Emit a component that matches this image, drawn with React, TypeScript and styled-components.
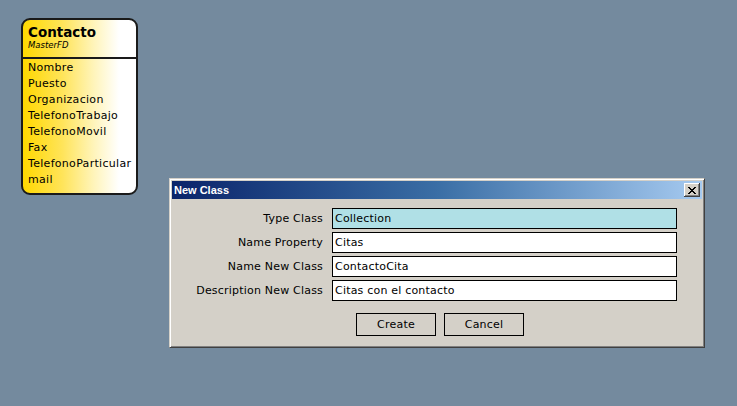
import React from 'react';
import styled, { createGlobalStyle } from 'styled-components';

const GlobalStyle = createGlobalStyle`
  html, body {
    margin: 0;
    padding: 0;
    background: #748a9e;
  }
  body {
    font-family: "DejaVu Sans", Verdana, sans-serif;
    font-size: 11px;
  }
`;

const Desktop = styled.div<{}>`
  position: relative;
  width: 737px;
  height: 406px;
  overflow: hidden;
  background: #748a9e;
`;

/* diagram node */
const ClassNode = styled.div<{ $x: number; $y: number }>`
  position: absolute;
  left: ${(p) => p.$x}px;
  top: ${(p) => p.$y}px;
  width: 117px;
  box-sizing: border-box;
  border: 2px solid #1a1a1a;
  border-radius: 9px;
  background: linear-gradient(to right, #ffd800 0%, #ffe45a 35%, #fff4b8 62%, #ffffff 85%);
  overflow: hidden;
`;

const NodeHeader = styled.div<{}>`
  padding: 4px 5px 6px 5px;
  border-bottom: 2px solid #1a1a1a;
`;

const NodeTitle = styled.div<{}>`
  font-weight: bold;
  font-size: 13.5px;
  line-height: 16px;
  color: #000;
`;

const NodeSub = styled.div<{}>`
  font-style: italic;
  font-size: 8.5px;
  line-height: 11px;
  color: #000;
`;

const FieldList = styled.ul<{}>`
  list-style: none;
  margin: 0;
  padding: 1px 0 5px 5px;
`;

const Field = styled.li<{}>`
  font-size: 11px;
  letter-spacing: 0.3px;
  line-height: 16px;
  color: #000;
  white-space: nowrap;
`;

/* classic window */
const Window = styled.div<{ $x: number; $y: number }>`
  position: absolute;
  left: ${(p) => p.$x}px;
  top: ${(p) => p.$y}px;
  width: 536px;
  box-sizing: border-box;
  background: #d4d0c8;
  border-top: 1px solid #d4d0c8;
  border-left: 1px solid #d4d0c8;
  border-right: 1px solid #404040;
  border-bottom: 1px solid #404040;
  box-shadow: inset 1px 1px 0 #ffffff, inset -1px -1px 0 #808080;
  padding: 2px;
`;

const TitleBar = styled.div<{}>`
  height: 18px;
  display: flex;
  align-items: center;
  justify-content: space-between;
  padding: 0 2px 0 2px;
  background: linear-gradient(to right, #0a246a 0%, #3a6ea5 50%, #a6caf0 100%);
`;

const TitleText = styled.span<{}>`
  color: #fff;
  font-family: "Liberation Sans", Arial, sans-serif;
  font-weight: bold;
  font-size: 11px;
`;

const CloseButton = styled.button<{}>`
  width: 16px;
  height: 14px;
  padding: 0;
  margin: 0;
  display: flex;
  align-items: center;
  justify-content: center;
  background: #d4d0c8;
  border: none;
  box-shadow: inset -1px -1px 0 #404040, inset 1px 1px 0 #ffffff, inset -2px -2px 0 #808080;
`;

const FormGrid = styled.div<{}>`
  display: grid;
  grid-template-columns: 160px 345px;
  row-gap: 3px;
  padding-top: 9px;
`;

const Label = styled.label<{}>`
  text-align: right;
  padding-right: 9px;
  line-height: 21px;
  color: #000;
  font-size: 11px;
  letter-spacing: 0.2px;
`;

const TextBox = styled.div<{ $tint?: boolean }>`
  height: 21px;
  box-sizing: border-box;
  border: 1px solid #000;
  background: ${(p) => (p.$tint ? '#b0e0e6' : '#ffffff')};
  padding: 0 2px;
  line-height: 19px;
  font-size: 11px;
  letter-spacing: 0.2px;
  color: #000;
  white-space: nowrap;
  overflow: hidden;
`;

const ButtonRow = styled.div<{}>`
  display: flex;
  justify-content: center;
  gap: 8px;
  padding: 12px 0 9px 6px;
`;

const PushButton = styled.button<{}>`
  width: 80px;
  height: 23px;
  box-sizing: border-box;
  border: 1px solid #000;
  background: #d4d0c8;
  font-family: "DejaVu Sans", Verdana, sans-serif;
  font-size: 11px;
  letter-spacing: 0.2px;
  color: #000;
  padding: 0;
`;

const fields = [
  'Nombre',
  'Puesto',
  'Organizacion',
  'TelefonoTrabajo',
  'TelefonoMovil',
  'Fax',
  'TelefonoParticular',
  'mail',
];

const rows = [
  { label: 'Type Class', value: 'Collection', tint: true },
  { label: 'Name Property', value: 'Citas' },
  { label: 'Name New Class', value: 'ContactoCita' },
  { label: 'Description New Class', value: 'Citas con el contacto' },
];

const App = () => {
  return (
    <Desktop>
      <GlobalStyle />
      <ClassNode $x={21} $y={18}>
        <NodeHeader>
          <NodeTitle>Contacto</NodeTitle>
          <NodeSub>MasterFD</NodeSub>
        </NodeHeader>
        <FieldList>
          {fields.map((f) => (
            <Field key={f}>{f}</Field>
          ))}
        </FieldList>
      </ClassNode>

      <Window $x={169} $y={178}>
        <TitleBar>
          <TitleText>New Class</TitleText>
          <CloseButton aria-label="close">
            <svg width="8" height="7" viewBox="0 0 8 7">
              <path d="M0 0h2v1h1v1h2V1h1V0h2v1H7v1H6v1H5v1h1v1h1v1h1v1H6V6H5V5H3v1H2v1H0V6h1V5h1V4h1V3H2V2H1V1H0z" fill="#000" />
            </svg>
          </CloseButton>
        </TitleBar>
        <FormGrid>
          {rows.map((r) => (
            <React.Fragment key={r.label}>
              <Label>{r.label}</Label>
              <TextBox $tint={r.tint}>{r.value}</TextBox>
            </React.Fragment>
          ))}
        </FormGrid>
        <ButtonRow>
          <PushButton>Create</PushButton>
          <PushButton>Cancel</PushButton>
        </ButtonRow>
      </Window>
    </Desktop>
  );
};

export default App;
